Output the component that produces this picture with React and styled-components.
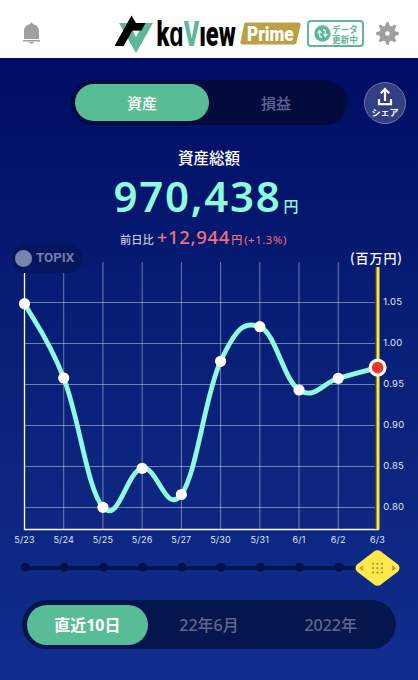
import React, {useState} from 'react';
import styled, {createGlobalStyle} from "styled-components";

const GlobalStyle = createGlobalStyle`
  * {
    box-sizing: border-box;
  }
  body {
    margin: 0;
    font-family: "Noto Sans", "Noto Sans CJK JP", sans-serif;
  }
`;
const Screen = styled.div`
  width: 418px;
  height: 680px;
  overflow: hidden;
  display: flex;
  flex-direction: column;
  color: #ffffff;
  background: linear-gradient(180deg, #010c62 0%, #010e66 14%, #071d75 44%, #0c257f 70%, #102e8d 100%);
`;
const Header = styled.header`
  height: 58px;
  flex: none;
  display: flex;
  align-items: center;
  padding: 9px 20px 0 23px;
  background: #ffffff;
`;
const BellIcon = styled.svg`
  width: 17px;
  height: 23px;
  flex: none;
`;
const Logo = styled.svg`
  width: 122px;
  height: 40px;
  flex: none;
  margin: 0 0 0 75px;
  overflow: visible;
`;
const Wordmark = styled.text`
  font: 900 ${p => p.$size}px Roboto, sans-serif;
`;
const Prime = styled.svg`
  width: 61px;
  height: 23px;
  flex: none;
  margin-left: 3px;
  overflow: visible;
`;
const UpdateBadge = styled.div`
  width: 57px;
  height: 27px;
  flex: none;
  margin: 0 12px 0 6px;
  display: flex;
  align-items: center;
  gap: 1px;
  padding-left: 5px;
  border: 2px solid #5fb79a;
  border-radius: 4px;
  color: #5fb79a;
  font: 700 8.6px/10px "Noto Sans CJK JP", sans-serif;
  white-space: nowrap;
`;
const Refresh = styled.svg`
  width: 17px;
  height: 17px;
  flex: none;
`;
const GearIcon = styled.svg`
  width: 23px;
  height: 23px;
  flex: none;
`;
const TopRow = styled.div`
  display: flex;
  align-items: center;
  height: 45px;
  flex: none;
  margin: 22px 12px 0 71px;
`;
const Tabs = styled.div`
  display: flex;
  width: ${p => p.$width}px;
  height: ${p => p.$height}px;
  flex: none;
  padding: ${p => p.$pad}px;
  border-radius: 25px;
  background: ${p => p.$bg};
`;
const Tab = styled.button`
  flex: 1;
  padding: ${p => p.$shift}px 0 0;
  border: none;
  border-radius: 21px;
  background: ${p => p.$active ? '#58bd94' : 'transparent'};
  color: ${p => p.$active ? '#ffffff' : '#5f6790'};
  font-family: "Noto Sans", "Noto Sans CJK JP", sans-serif;
  font-size: ${p => p.$size}px;
  font-weight: ${p => p.$active ? p.$weight : 500};
  line-height: 24px;
  cursor: pointer;
`;
const ShareButton = styled.button`
  width: 42px;
  height: 42px;
  margin-left: auto;
  padding: 4px 0 0;
  display: flex;
  flex-direction: column;
  align-items: center;
  border: 1px solid #6d77ad;
  border-radius: 50%;
  background: #343e83;
  color: #ffffff;
  font: 700 9px/13px "Noto Sans CJK JP", sans-serif;
  white-space: nowrap;
`;
const Summary = styled.section`
  display: flex;
  flex-direction: column;
  align-items: center;
  height: 118px;
  flex: none;
  padding-top: 21px;
`;
const Title = styled.h1`
  margin: 0;
  font: 500 15.5px/22px "Noto Sans CJK JP", sans-serif;
`;
const Amount = styled.div`
  display: flex;
  align-items: baseline;
  height: 55px;
  margin-left: -6px;
  color: #8ffbdd;
  font-size: 42px;
  font-weight: 600;
  line-height: 55px;
  letter-spacing: 1.7px;
`;
const Yen = styled.span`
  margin-left: ${p => p.$gap}px;
  font: 500 ${p => p.$size}px/1 "Noto Sans CJK JP", sans-serif;
  letter-spacing: 0;
`;
const Change = styled.div`
  display: flex;
  align-items: baseline;
  height: 24px;
  margin: 2px 0 0 -11px;
  color: #f0707b;
  line-height: 24px;
  white-space: nowrap;
`;
const ChangeLabel = styled.span`
  color: #e6e9f7;
  font: 400 11.2px/24px "Noto Sans CJK JP", sans-serif;
`;
const ChangeValue = styled.span`
  margin-left: 3px;
  font-size: 18.5px;
  font-weight: 500;
  letter-spacing: 0.7px;
`;
const ChangeRate = styled.span`
  margin-left: 2px;
  font-size: 11.3px;
  letter-spacing: 0.6px;
`;
const ChartArea = styled.section`
  position: relative;
  height: 307px;
  flex: none;
`;
const ChartSvg = styled.svg`
  display: block;
  width: 418px;
  height: 307px;
`;
const Legend = styled.div`
  position: absolute;
  left: 12px;
  top: 0;
  width: 71px;
  height: 30px;
  display: flex;
  align-items: center;
  gap: 4px;
  padding-left: 3px;
  border-radius: 15px;
  background: #06165d;
  color: #747daa;
  font: 700 13.3px/30px Roboto, sans-serif;
`;
const LegendDot = styled.span`
  width: 17px;
  height: 17px;
  flex: none;
  border-radius: 50%;
  background: #7a82ad;
`;
const AxisText = styled.text`
  fill: #dfe4f7;
  font: 400 ${p => p.$size}px Inter, sans-serif;
  letter-spacing: 0.2px;
`;
const UnitText = styled.text`
  fill: #ffffff;
  font: 500 13px "Noto Sans CJK JP", sans-serif;
`;
const Slider = styled.svg`
  display: block;
  width: 418px;
  height: 40px;
  flex: none;
`;
const Footer = styled.nav`
  padding: 10px 0 0 22px;
`;

const points = [
    {date: '5/23', y: 303.7},
    {date: '5/24', y: 378},
    {date: '5/25', y: 507.3},
    {date: '5/26', y: 468.3},
    {date: '5/27', y: 494.5},
    {date: '5/30', y: 361.3},
    {date: '5/31', y: 326.7},
    {date: '6/1', y: 390},
    {date: '6/2', y: 378.3},
    {date: '6/3', y: 367.7},
].map((p, i) => ({...p, x: 24.5 + i * 39.22}))
const levels = ['1.05', '1.00', '0.95', '0.90', '0.85', '0.80']
const periods = ['直近10日', '22年6月', '2022年']

const curve = (pts) => {
    const at = (i) => pts[Math.max(0, Math.min(pts.length - 1, i))]
    let d = `M${pts[0].x} ${pts[0].y}`
    for (let i = 0; i < pts.length - 1; i++) {
        const [a, b, c, e] = [at(i - 1), at(i), at(i + 1), at(i + 2)]
        d += `C${b.x + (c.x - a.x) * .2} ${b.y + (c.y - a.y) * .2} ${c.x - (e.x - b.x) * .2} ${c.y - (e.y - b.y) * .2} ${c.x} ${c.y}`
    }
    return d
}

const Chart = () => (
    <ChartArea>
        <ChartSvg viewBox="0 243 418 307">
            {points.slice(1, 9).map((p, i) => (
                <path key={p.date} d={`M${p.x} ${i === 0 ? 273 : 262}V529`} stroke="#fff" strokeOpacity=".42"/>
            ))}
            {levels.map((l, i) => (
                <path key={l} d={`M24 ${302.5 + i * 41}H377`} stroke="#fff" strokeOpacity=".42"/>
            ))}
            <path d="M24.5 273V529.5H379" fill="none" stroke="#fff" strokeWidth="1.3"/>
            <path d="M376 267V529" stroke="#3d3f33" strokeWidth="2"/>
            <path d="M378 267V529.5" stroke="#fbe43d" strokeWidth="3"/>
            <path d={curve(points)} fill="none" stroke="#8ffbdd" strokeWidth="4.8"/>
            {points.slice(0, 9).map(p => <circle key={p.date} cx={p.x} cy={p.y} r="5.6" fill="#fff"/>)}
            <circle cx="377.6" cy="367.6" r="9" fill="#fff"/>
            <circle cx="377.6" cy="367.6" r="5.8" fill="#e9392a"/>
            {levels.map((l, i) => <AxisText key={l} $size={9.5} x="383.3" y={305.3 + i * 41}>{l}</AxisText>)}
            {points.map(p => <AxisText key={p.date} $size={9} x={p.x} y="543" textAnchor="middle">{p.date}</AxisText>)}
            <UnitText x="350" y="262.6" textLength="52">(百万円)</UnitText>
        </ChartSvg>
        <Legend><LegendDot/>TOPIX</Legend>
    </ChartArea>
)

const DateSlider = () => (
    <Slider viewBox="0 550 418 40">
        <path d="M25 568H362" stroke="#051552" strokeWidth="4"/>
        {points.slice(0, 9).map(p => <circle key={p.date} cx={p.x + .6} cy="567.2" r="4.4" fill="#04114b"/>)}
        <path d="M374 551.5Q377.5 549 381 551.5L398 564.5Q401 568 398 571.5L381 584.5Q377.5 587 374 584.5L357 571.5Q354 568 357 564.5Z" fill="#ffe94a"/>
        <path d="M363.2 565V571L359 568ZM392 565V571L396.2 568Z" transform="translate(0 .3)" fill="#b9a63d"/>
        {[373, 377.5, 382].map(x => [563.8, 568.2, 572.6].map(y => (
            <circle key={`${x}-${y}`} cx={x} cy={y} r="1.1" fill="#a69536"/>
        )))}
    </Slider>
)

const App = () => {
    const [mode, setMode] = useState('資産')
    const [period, setPeriod] = useState(periods[0])

    return (
        <Screen>
            <GlobalStyle/>
            <Header>
                <BellIcon viewBox="0 0 17 23" fill="#a0a0a0">
                    <path d="M7.3 2V1.2Q8.5-.4 9.7 1.2V2Q16 3.2 16 9.5V17H1V9.5Q1 3.2 7.3 2ZM0 18H17V19.4H0ZM5.8 20H11.2Q8.5 23.5 5.8 20Z"/>
                </BellIcon>
                <Logo viewBox="115 13 122 40">
                    <path d="M119 22H153L136 52Z" fill="#5fb79a"/>
                    <path d="M131.5 14.5L136 22H145.5L141.5 29.5H132.5L123.5 45H114.5Z" fill="#000"/>
                    <path d="M132.8 30H139.2L136 36.3Z" fill="#fff"/>
                    <Wordmark $size={35.5} transform="translate(156.5 44.7) scale(.6 1)" textLength="132"
                              lengthAdjust="spacingAndGlyphs">
                        kɑ<tspan fill="#5fb79a">V</tspan>ıew
                    </Wordmark>
                </Logo>
                <Prime viewBox="0 0 61 23">
                    <path d="M6 .5H58.5Q61 .5 60.5 3L56.5 20.5Q56 22.5 54 22.5H2.5Q0 22.5 .5 20L4 2.5Q4.5 .5 6 .5Z" fill="#b9a144"/>
                    <Wordmark $size={20.5} x="7" y="18.8" fill="#fff" textLength="46.5"
                              lengthAdjust="spacingAndGlyphs">Prime</Wordmark>
                </Prime>
                <UpdateBadge>
                    <Refresh viewBox="0 0 17 17">
                        <circle cx="8.5" cy="8.5" r="8.2" fill="#5fb79a"/>
                        <path d="M8 12.2H7.2Q5.6 12.2 5.6 10.6V6M3.6 7.8L5.6 5.6L7.6 7.8M9 4.8H9.8Q11.4 4.8 11.4 6.4V11M9.4 9.2L11.4 11.4L13.4 9.2" fill="none" stroke="#fff" strokeWidth="1.2"/>
                    </Refresh>
                    <span>データ<br/>更新中</span>
                </UpdateBadge>
                <GearIcon viewBox="-11.5 -11.5 23 23">
                    {[0, 45, 90, 135, 180, 225, 270, 315].map(a => (
                        <path key={a} d="M-2.8-6L-1.2-11.3H1.2L2.8-6Z" transform={`rotate(${a})`} fill="#a0a0a0"/>
                    ))}
                    <circle r="5.2" fill="none" stroke="#a0a0a0" strokeWidth="5.8"/>
                </GearIcon>
            </Header>
            <TopRow>
                <Tabs $width={276} $height={45} $pad={4} $bg="#020a3e">
                    {['資産', '損益'].map(t => (
                        <Tab key={t} $size={15} $weight={500} $shift={0} $active={mode === t}
                             onClick={() => setMode(t)}>{t}</Tab>
                    ))}
                </Tabs>
                <ShareButton>
                    <svg width="16" height="19" viewBox="0 0 16 19" fill="none" stroke="#fff" strokeWidth="2.2">
                        <path d="M2 12V17.2H14V12M8 14V2.5M3.8 6.3L8 2L12.2 6.3"/>
                    </svg>
                    シェア
                </ShareButton>
            </TopRow>
            <Summary>
                <Title>資産総額</Title>
                <Amount>970,438<Yen $size={15} $gap={2}>円</Yen></Amount>
                <Change>
                    <ChangeLabel>前日比</ChangeLabel>
                    <ChangeValue>+12,944</ChangeValue>
                    <Yen $size={11} $gap={1}>円</Yen>
                    <ChangeRate>(+1.3%)</ChangeRate>
                </Change>
            </Summary>
            <Chart/>
            <DateSlider/>
            <Footer>
                <Tabs $width={374} $height={49} $pad={4.5} $bg="#05164f">
                    {periods.map(t => (
                        <Tab key={t} $size={16} $weight={700} $shift={1} $active={period === t}
                             onClick={() => setPeriod(t)}>{t}</Tab>
                    ))}
                </Tabs>
            </Footer>
        </Screen>
    );
};

export default App;
